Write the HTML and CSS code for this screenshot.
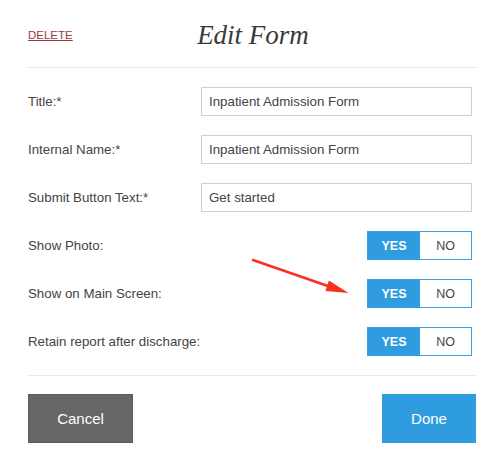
FILE: index.html
```html
<!DOCTYPE html>
<html>
<head>
<meta charset="utf-8">
<link rel="stylesheet" href="styles.css">
</head>
<body>
<div class="dialog">
  <div class="header">
    <a class="delete" href="#">DELETE</a>
    <h1 class="title">Edit Form</h1>
    <span></span>
  </div>
  <div class="form">
    <div class="row">
      <label class="label">Title:*</label>
      <input class="field" type="text" value="Inpatient Admission Form">
    </div>
    <div class="row">
      <label class="label">Internal Name:*</label>
      <input class="field" type="text" value="Inpatient Admission Form">
    </div>
    <div class="row">
      <label class="label">Submit Button Text:*</label>
      <input class="field" type="text" value="Get started">
    </div>
    <div class="row">
      <label class="label">Show Photo:</label>
      <div class="toggle"><span class="opt on">YES</span><span class="opt">NO</span></div>
    </div>
    <div class="row">
      <label class="label">Show on Main Screen:</label>
      <div class="toggle"><span class="opt on">YES</span><span class="opt">NO</span></div>
    </div>
    <div class="row">
      <label class="label">Retain report after discharge:</label>
      <div class="toggle"><span class="opt on">YES</span><span class="opt">NO</span></div>
    </div>
  </div>
  <div class="footer">
    <button class="btn cancel">Cancel</button>
    <button class="btn done">Done</button>
  </div>
</div>
<svg class="arrow" width="488" height="466" viewBox="0 0 488 466">
  <line x1="253" y1="260" x2="330" y2="286.8" stroke="#f7321f" stroke-width="2.6" stroke-linecap="round"/>
  <polygon points="348.5,293 325.4,291 328.9,280.6" fill="#f7321f"/>
</svg>
</body>
</html>
```
FILE: styles.css
```css
html, body {
  margin: 0;
  padding: 0;
  background: #fff;
}
body {
  font-family: "Liberation Sans", Arial, sans-serif;
  color: #444;
  position: relative;
  width: 488px;
  height: 466px;
  overflow: hidden;
}
.dialog {
  margin-left: 28px;
  width: 448px;
}
.header {
  height: 68px;
  box-sizing: border-box;
  border-bottom: 1px solid #e8e8e8;
  display: grid;
  grid-template-columns: 1fr auto 1fr;
  align-items: start;
}
.delete {
  margin-top: 28px;
  font-size: 11.5px;
  line-height: 14px;
  color: #9c3b3b;
  text-decoration: underline;
  justify-self: start;
}
.title {
  margin: 19px 0 0 0;
  font-family: "Liberation Serif", "Times New Roman", serif;
  font-style: italic;
  font-weight: normal;
  font-size: 27px;
  line-height: 32px;
  color: #3a3a3a;
  transform: translateX(1px);
}
.form {
  display: flex;
  flex-direction: column;
  gap: 19px;
  padding: 19px 0 19px 0;
  border-bottom: 1px solid #e8e8e8;
}
.row {
  display: flex;
  align-items: center;
  height: 29px;
  padding-right: 4px;
}
.label {
  flex: 1;
  font-size: 13.3px;
  color: #444;
}
.field {
  width: 271px;
  height: 29px;
  box-sizing: border-box;
  border: 1px solid #cfcfcf;
  padding: 0 7px;
  font-family: "Liberation Sans", Arial, sans-serif;
  font-size: 13.3px;
  color: #444;
  outline: none;
  margin: 0;
}
.toggle {
  display: flex;
  width: 105px;
  height: 29px;
  box-sizing: border-box;
  border: 1px solid #3a9fe2;
}
.opt {
  flex: 1;
  display: flex;
  align-items: center;
  justify-content: center;
  font-size: 12.5px;
  color: #444;
  background: #fff;
}
.opt.on {
  flex: 0 0 52px;
  background: #309ce0;
  color: #fff;
  font-weight: bold;
}
.footer {
  display: flex;
  justify-content: space-between;
  padding-top: 18px;
}
.btn {
  height: 49px;
  border: none;
  margin: 0;
  font-family: "Liberation Sans", Arial, sans-serif;
  font-size: 15px;
  color: #fff;
  padding: 0;
}
.cancel {
  width: 105px;
  background: #666;
  border: 1px solid #5c5c5c;
}
.done {
  width: 94px;
  background: #309ce0;
}
.arrow {
  position: absolute;
  left: 0;
  top: 0;
  pointer-events: none;
}
```
